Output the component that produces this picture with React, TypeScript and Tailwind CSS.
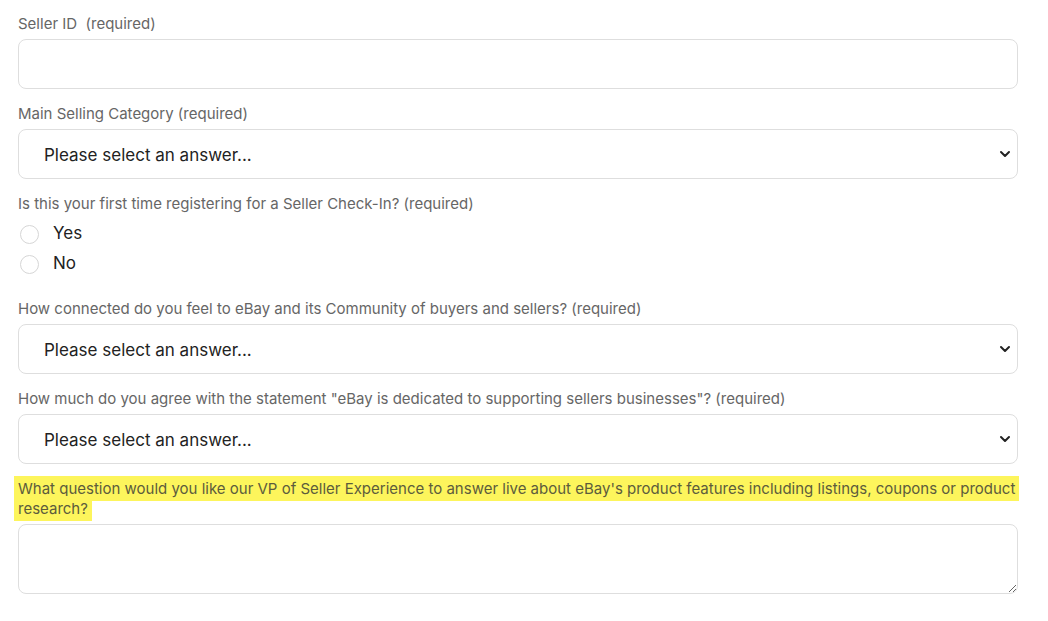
import { ChevronDown } from 'lucide-react';

const labelCls = "block pt-px text-[15px] leading-5 text-[#666666]";
const boxCls = "w-full rounded-lg border border-[#dedede] bg-white";

function SelectField({ label }: { label: string }) {
  return (
    <div>
      <label className={labelCls}>{label}</label>
      <div className="relative mt-[5px]">
        <select
          defaultValue=""
          className={`${boxCls} h-[50px] appearance-none pl-[25px] pr-10 pt-[3px] text-[17px] text-[#222222] outline-none`}
        >
          <option value="">Please select an answer...</option>
        </select>
        <ChevronDown
          className="pointer-events-none absolute right-[5px] top-1/2 h-4 w-4 -translate-y-1/2 text-[#222222]"
          strokeWidth={3}
        />
      </div>
    </div>
  );
}

export default function App() {
  return (
    <div className="min-h-screen bg-white px-[18px] pt-[13px] font-['Inter','Liberation_Sans',sans-serif]" style={{ width: 1036 }}>
      <div className="flex flex-col">
        {/* Seller ID */}
        <div>
          <label className={labelCls}>Seller ID&nbsp; (required)</label>
          <input type="text" className={`${boxCls} mt-[5px] h-[50px] px-4 outline-none`} />
        </div>

        <div className="mt-[14px]">
          <SelectField label="Main Selling Category (required)" />
        </div>

        {/* first time radio */}
        <div className="mt-[14px]">
          <label className={labelCls}>Is this your first time registering for a Seller Check-In? (required)</label>
          <div className="mt-[5px] flex flex-col">
            {['Yes', 'No'].map((opt) => (
              <label key={opt} className="flex h-[30px] items-center">
                <span className="ml-[2px] h-[19px] w-[19px] rounded-full border border-[#d6d6d6] bg-white" />
                <span className="ml-[14px] text-[17px] text-[#222222]">{opt}</span>
              </label>
            ))}
          </div>
        </div>

        <div className="mt-[19px]">
          <SelectField label="How connected do you feel to eBay and its Community of buyers and sellers? (required)" />
        </div>

        <div className="mt-[14px]">
          <SelectField label={'How much do you agree with the statement "eBay is dedicated to supporting sellers businesses"? (required)'} />
        </div>

        {/* highlighted question */}
        <div className="mt-[15px]">
          <label className="block text-[15px] leading-[19.5px] text-[#5c5c3c]">
            <span className="-ml-1 bg-[#fdf55c] px-1 py-[3px] [box-decoration-break:clone]">
              What question would you like our VP of Seller Experience to answer live about eBay's product features including listings, coupons or product research?
            </span>
          </label>
          <textarea className={`${boxCls} mt-[6px] block h-[70px] px-4 py-2 outline-none`} />
        </div>
      </div>
    </div>
  );
}
